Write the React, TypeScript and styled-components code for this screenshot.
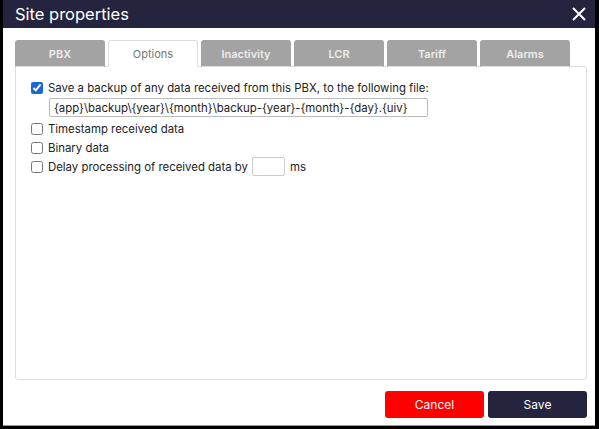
import styled, { createGlobalStyle } from "styled-components";

const Global = createGlobalStyle`
  html, body { margin: 0; padding: 0; background: #000; }
  body { font-family: Inter, "Noto Sans", sans-serif; }
`;

const tabs = ["PBX", "Options", "Inactivity", "LCR", "Tariff", "Alarms"];

export default function App() {
  return (
    <>
      <Global />
      <Frame>
        <TitleBar>
          <Title>Site properties</Title>
          <Close>
            <svg width="14" height="14" viewBox="0 0 14 14">
              <path d="M1 1 L13 13 M13 1 L1 13" stroke="#fff" strokeWidth="2" />
            </svg>
          </Close>
        </TitleBar>
        <Body>
          <TabBar>
            {tabs.map((t) => (
              <Tab key={t} $active={t === "Options"}>
                {t}
              </Tab>
            ))}
          </TabBar>
          <Panel>
            <Row>
              <Check type="checkbox" defaultChecked />
              Save a backup of any data received from this PBX, to the following file:
            </Row>
            <PathInput defaultValue="{app}\backup\{year}\{month}\backup-{year}-{month}-{day}.{uiv}" />
            <Row>
              <Check type="checkbox" />
              Timestamp received data
            </Row>
            <Row>
              <Check type="checkbox" />
              Binary data
            </Row>
            <Row>
              <Check type="checkbox" />
              Delay processing of received data by
              <SmallInput />
              ms
            </Row>
          </Panel>
          <Footer>
            <Button $bg="#ff0000">Cancel</Button>
            <Button $bg="#25243f">Save</Button>
          </Footer>
        </Body>
      </Frame>
    </>
  );
}

const Frame = styled.div`
  width: 592px;
  height: 425px;
  margin-left: 3px;
  display: flex;
  flex-direction: column;
  background: #fff;
  border-bottom: 1px solid #999;
`;

const TitleBar = styled.div`
  height: 28px;
  background: #25243f;
  display: flex;
  align-items: center;
  justify-content: space-between;
  padding: 0 9px 0 12px;
`;

const Title = styled.div`
  color: #fff;
  font-size: 16.5px;
  line-height: 28px;
`;

const Close = styled.div`
  display: flex;
  align-items: center;
`;

const Body = styled.div`
  flex: 1;
  display: flex;
  flex-direction: column;
  padding: 12px 8px 7px 12px;
`;

const TabBar = styled.div`
  display: flex;
  gap: 3px;
  position: relative;
  z-index: 1;
`;

const Tab = styled.div<{ $active?: boolean }>`
  width: 90px;
  height: 27px;
  box-sizing: border-box;
  display: flex;
  align-items: center;
  justify-content: center;
  font-size: 11px;
  border-radius: 3px 3px 0 0;
  background: ${(p) => (p.$active ? "#fff" : "#a3a3a3")};
  color: ${(p) => (p.$active ? "#777" : "#ececec")};
  font-weight: ${(p) => (p.$active ? 400 : 600)};
  border: 1px solid ${(p) => (p.$active ? "#ddd" : "#a3a3a3")};
  border-bottom: ${(p) => (p.$active ? "1px solid #fff" : "1px solid #ddd")};
`;

const Panel = styled.div`
  flex: 1;
  margin-top: -1px;
  border: 1px solid #ddd;
  border-radius: 0 3px 3px 3px;
  padding: 12px 14px;
  display: flex;
  flex-direction: column;
  gap: 2px;
  font-size: 11.4px;
  color: #222;
`;

const Row = styled.label`
  display: flex;
  align-items: center;
  height: 17px;
`;

const Check = styled.input`
  width: 12px;
  height: 12px;
  margin: 0 5px 0 1px;
  accent-color: #1a66d9;
`;

const PathInput = styled.input`
  width: 379px;
  margin: 0 0 1px 19px;
  height: 19px;
  box-sizing: border-box;
  border: 1px solid #bbb;
  border-radius: 2px;
  font-family: Inter, sans-serif;
  font-size: 11.4px;
  color: #222;
  padding: 0 4px;
`;

const SmallInput = styled.input`
  width: 33px;
  height: 19px;
  box-sizing: border-box;
  margin: 0 5px 0 4px;
  border: 1px solid #ccc;
  border-radius: 2px;
`;

const Footer = styled.div`
  display: flex;
  justify-content: flex-end;
  gap: 4px;
  padding-top: 11px;
`;

const Button = styled.button<{ $bg: string }>`
  width: 99px;
  height: 27px;
  border: none;
  border-radius: 3px;
  background: ${(p) => p.$bg};
  color: #fff;
  font-family: Inter, sans-serif;
  font-size: 12px;
`;
